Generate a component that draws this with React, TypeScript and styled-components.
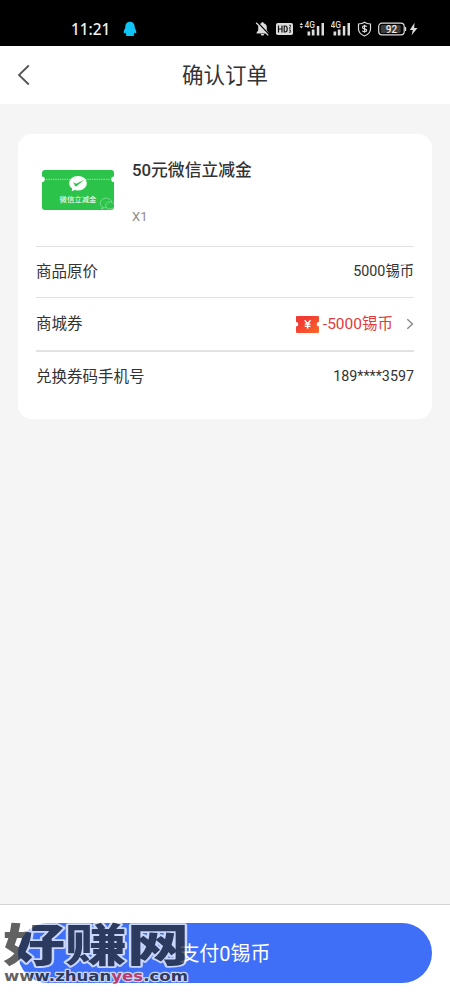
import * as React from "react";
import { ReactElement } from "react";
import styled, { createGlobalStyle } from "styled-components";

const colors = {
	page: "#f5f5f5",
	white: "#fff",
	text: "#333",
	muted: "#8c8c8c",
	line: "#e2e2e2",
	red: "#e03b3b",
	green: "#2cc34b",
	blue: "#3e6ff6",
	status: "#dcdcdc",
};

const GlobalStyle = createGlobalStyle`
	* {
		box-sizing: border-box;
	}
	body {
		margin: 0;
		background: ${colors.page};
		font-family: Roboto, "Noto Sans CJK SC", sans-serif;
		color: ${colors.text};
	}
	svg {
		display: block;
		flex: none;
	}
`;

const Screen = styled.div`
	display: flex;
	flex-direction: column;
	height: 1000px;
	overflow: hidden;
`;

const StatusBar = styled.div`
	display: flex;
	align-items: center;
	justify-content: space-between;
	height: 46px;
	padding: 12px 31px 0 71px;
	background: #000;
`;

const StatusGroup = styled.div<{ gap: number }>`
	display: flex;
	align-items: center;
	gap: ${(p) => p.gap}px;
`;

const Clock = styled.span`
	width: 39px;
	font: 500 15.3px/20px "Noto Sans", sans-serif;
	color: #f2f2f2;
	white-space: nowrap;
`;

const Header = styled.header`
	display: grid;
	grid-template-columns: 60px 1fr 60px;
	align-items: center;
	height: 58px;
	background: ${colors.white};
`;

const Back = styled.button`
	display: flex;
	height: 58px;
	padding: 0 0 0 17px;
	align-items: center;
	border: 0;
	background: none;
`;

const Title = styled.h1`
	margin: 0;
	padding-top: 2px;
	font-size: 21.5px;
	line-height: 32px;
	font-weight: 400;
	text-align: center;
`;

const Content = styled.main`
	flex: 1;
	padding: 30px 18px;
`;

const Card = styled.section`
	height: 285px;
	padding: 0 18px;
	border-radius: 14px;
	background: ${colors.white};
`;

const Product = styled.div`
	display: flex;
	gap: 18px;
	height: 112px;
	padding: 35px 0 0 6px;
`;

const ProductInfo = styled.div`
	display: flex;
	flex-direction: column;
	gap: 23px;
	margin-top: -11px;
`;

const ProductName = styled.span`
	font-size: 16.8px;
	line-height: 24px;
	font-weight: 500;
`;

const Amount = styled.span`
	font-size: 13px;
	line-height: 24px;
	color: ${colors.muted};
`;

const Row = styled.div<{ height: number; line?: number }>`
	display: flex;
	align-items: center;
	justify-content: space-between;
	height: ${(p) => p.height}px;
	border-top: ${(p) => p.line || 1}px solid ${colors.line};
`;

const Label = styled.span`
	font-size: 15.5px;
	line-height: 24px;
`;

const Value = styled.span<{ large?: boolean }>`
	padding-bottom: ${(p) => (p.large ? 0 : 2)}px;
	font-size: ${(p) => (p.large ? 15.5 : 14.3)}px;
	line-height: 24px;
`;

const Coupon = styled.div`
	display: flex;
	align-items: center;
	color: ${colors.red};
	svg:first-child {
		margin-right: 4px;
	}
	svg:last-child {
		margin-left: 13px;
	}
`;

const Footer = styled.footer`
	position: relative;
	height: 96px;
	padding: 18px;
	border-top: 1px solid #d4d4d4;
	background: ${colors.white};
`;

const PayButton = styled.button`
	display: block;
	width: 100%;
	height: 60px;
	padding: 2px 0 0;
	border: 0;
	border-radius: 30px;
	background: ${colors.blue};
	font: 400 20px/58px Roboto, "Noto Sans CJK SC", sans-serif;
	color: ${colors.white};
`;

const Watermark = styled.svg`
	position: absolute;
	left: 0;
	top: 13px;
	overflow: visible;
	opacity: 0.72;
	pointer-events: none;
	text {
		fill: #272727;
		stroke: #fff;
		stroke-linejoin: round;
		paint-order: stroke;
	}
	.red {
		fill: #e52a3a;
	}
`;

const PenguinIcon = () => (
	<svg width="14" height="16" viewBox="0 0 14 16">
		<path
			fill="#10c4f7"
			d="M7 .8c3 0 4.7 2.2 4.7 5 0 1.400.6 2 1.100 3.200.6 1.400.8 2.900.2 3.300-.5.3-1-.3-1.300-.8-.2.9-.7 1.500-1.200 2 .5.3.8.600.7 1-.2.7-2.700.6-4.200.4-1.500.2-4 .3-4.200-.4-.1-.4.2-.7.7-1-.5-.5-1-1.100-1.200-2-.3.5-.8 1.100-1.300.8-.6-.4-.4-1.900.2-3.300.5-1.200 1.100-1.800 1.100-3.200 0-2.800 1.700-5 4.700-5z"
		/>
	</svg>
);

const MuteIcon = () => (
	<svg width="15" height="16" viewBox="0 0 15 16">
		<path fill={colors.status} d="M7.500 1.300c.8 0 1.200.4 1.300 1 2 .6 3 2.200 3 4.300v2.800l1.600 2.200v.8H1.600v-.8l1.600-2.200V6.600c0-2.100 1-3.700 3-4.300.1-.6.5-1 1.300-1zM5.800 13h3.400c-.2 1-.8 1.500-1.700 1.500S6 14 5.800 13z" />
		<path stroke="#000" strokeWidth="1.400" d="M2.300 1.200l12 12.500" />
		<path stroke={colors.status} strokeWidth="1.300" d="M1.200 1.800l12 12.600" />
	</svg>
);

const HdIcon = () => (
	<svg width="17" height="12" viewBox="0 0 17 12">
		<rect width="17" height="12" rx="1.800" fill={colors.status} />
		<path d="M2.500 2.500v7M6 2.500v7M2.500 6H6M8.200 3v6h1c1.400 0 2-1 2-3s-.6-3-2-3z" fill="none" stroke="#111" strokeWidth="1.200" />
		<path d="M13 2.300h1.500v1.500L13 5.200h1.800M13 7h1.700L13.800 8.200c1.400.2 1 1.600-.8 1.300" fill="none" stroke="#111" strokeWidth=".8" />
	</svg>
);

const SignalIcon = ({ arrows }: { arrows?: boolean }) => (
	<svg width={arrows ? 26 : 20} height="16" viewBox={arrows ? "-6 0 26 16" : "0 0 20 16"}>
		{arrows && <path fill={colors.status} d="M-5.500 4L-3.700 1.800-1.900 4zM-5.500 5.300h3.600l-1.800 2.200z" />}
		<g fill={colors.status}>
			<path d="M2.500 10.500h2.700v4H2.500zM6.800 8.500h2.700v6H6.800zM11.800 5h2.500v9.500h-2.500zM16.500 2h2.500v12.500h-2.500z" />
			<text x="-.5" y="7.200" fontSize="8.800" fontWeight="500" fontFamily="Roboto" textLength="10.500" lengthAdjust="spacingAndGlyphs">4G</text>
		</g>
	</svg>
);

const ShieldIcon = () => (
	<svg width="15" height="16" viewBox="0 0 15 16" fill="none" stroke={colors.status} strokeWidth="1.200">
		<path d="M7.500 1.200c1.700 1.200 3.800 1.700 6 1.800v5c0 3.200-2.300 5.500-6 7-3.700-1.500-6-3.800-6-7V3c2.200-.1 4.300-.6 6-1.800z" />
		<path d="M9.700 5.700C9 4.600 5.500 4.500 5.500 6.400c0 1.800 4.200 1 4.200 2.900 0 1.800-3.600 1.700-4.400.4M7.500 3.800v8" />
	</svg>
);

const BatteryIcon = () => (
	<svg width="41" height="14" viewBox="0 0 41 14">
		<rect x=".7" y="1.200" width="25.500" height="11.600" rx="3.300" fill="none" stroke={colors.status} strokeWidth="1.200" />
		<rect x="2.700" y="3" width="20" height="8" rx="1.500" fill="#3c3c3c" />
		<path d="M27.500 5v4" stroke={colors.status} strokeWidth="1.300" />
		<text x="13.500" y="10.700" textAnchor="middle" fontSize="10" fontWeight="500" fontFamily="Roboto" fill="#eee">92</text>
		<path d="M36.500.8L31.800 8h3l-1.200 5.300L39.500 6h-3.300z" fill={colors.status} />
	</svg>
);

const Voucher = () => (
	<svg width="72" height="42" viewBox="0 0 72 42">
		<path
			fill={colors.green}
			d="M3 1h66a3 3 0 0 1 3 3v3.500a2.800 2.800 0 0 0 0 5.600V38a3 3 0 0 1-3 3H3a3 3 0 0 1-3-3V13.100a2.800 2.800 0 0 0 0-5.600V4a3 3 0 0 1 3-3z"
		/>
		<path d="M4 10.300h64" stroke="#b9edc2" strokeWidth=".8" strokeDasharray="1.500 .8" />
		<path fill="#fff" d="M36 7c5 0 8.800 3.200 8.800 7.200s-3.800 7.200-8.800 7.200c-1.200 0-2.300-.2-3.300-.5l-3 1.300.5-2.700c-1.900-1.300-3-3.200-3-5.300C27.200 10.200 31 7 36 7z" />
		<path fill={colors.green} d="M31.200 13.300l3 1.500 8-4.100-7.700 6.600c-.5.4-1 .3-1.300-.3z" />
		<text x="36" y="32.500" textAnchor="middle" fontSize="7.400" fontWeight="400" fill="#fff">微信立减金</text>
		<g fill="none" stroke="#8bdd99" strokeWidth=".8">
			<path d="M65 38.500c-3.300 1-6.700-1.200-6.700-4.400 0-3 2.600-5 5.800-5 3 0 5 1.700 5.500 3.700M60 38l-.5 2 2.200-1" />
			<path d="M68 32.800c2 0 3.600 1.200 4 2.500M68 32.800c-2.500 0-4.400 1.600-4.400 3.700s2 3.500 4.200 3.500c1.500 0 3-.5 4.200-1.500M66 35.500v.3M62 32.500v.3M66 32v.3" />
		</g>
	</svg>
);

const CouponIcon = () => (
	<svg width="23" height="17" viewBox="0 0 23 17">
		<defs>
			<linearGradient id="coupon" x1="0" y1="0" x2="1" y2="1">
				<stop offset=".3" stopColor="#f23b32" />
				<stop offset="1" stopColor="#fb6a27" />
			</linearGradient>
		</defs>
		<path fill="url(#coupon)" d="M1.500 0h20A1.300 1.300 0 0 1 23 1.400V6a2.300 2.300 0 0 0 0 4.600v5a1.300 1.300 0 0 1-1.500 1.400h-20A1.300 1.300 0 0 1 0 15.600v-5A2.300 2.300 0 0 0 0 6V1.400A1.300 1.300 0 0 1 1.500 0z" />
		<path d="M8.700 4.300l2.900 3.500 2.900-3.500M11.600 7.800v5M8.700 8.100h5.800M8.700 10.400h5.800" fill="none" stroke="#fff" strokeWidth="1.400" />
	</svg>
);

const App = (): ReactElement => {
	return (
		<Screen>
			<GlobalStyle />
			<StatusBar>
				<StatusGroup gap={13}>
					<Clock>11:21</Clock>
					<PenguinIcon />
				</StatusGroup>
				<StatusGroup gap={6}>
					<MuteIcon />
					<HdIcon />
					<SignalIcon arrows />
					<SignalIcon />
					<ShieldIcon />
					<BatteryIcon />
				</StatusGroup>
			</StatusBar>

			<Header>
				<Back aria-label="返回">
					<svg width="14" height="22" viewBox="0 0 14 22" fill="none" stroke="#555" strokeWidth="1.800">
						<path d="M11.800 1.500L2 11l9.800 9.500" />
					</svg>
				</Back>
				<Title>确认订单</Title>
			</Header>

			<Content>
				<Card>
					<Product>
						<Voucher />
						<ProductInfo>
							<ProductName>50元微信立减金</ProductName>
							<Amount>X1</Amount>
						</ProductInfo>
					</Product>
					<Row height={51}>
						<Label>商品原价</Label>
						<Value>5000锡币</Value>
					</Row>
					<Row height={53}>
						<Label>商城券</Label>
						<Coupon>
							<CouponIcon />
							<Value large>-5000锡币</Value>
							<svg width="8" height="12" viewBox="0 0 8 12" fill="none" stroke="#888" strokeWidth="1.400">
								<path d="M1.300 1.200L6.500 6l-5.200 4.800" />
							</svg>
						</Coupon>
					</Row>
					<Row height={52} line={2}>
						<Label>兑换券码手机号</Label>
						<Value>189****3597</Value>
					</Row>
				</Card>
			</Content>

			<Footer>
				<PayButton>支付0锡币</PayButton>
				<Watermark width="192" height="70" viewBox="0 0 192 70">
					<text x="3" y="44" fontSize="45" fontWeight="900" strokeWidth="3.500" textLength="186" lengthAdjust="spacingAndGlyphs" fontFamily="Noto Sans CJK SC">
						好赚网
					</text>
					<text x="4" y="63" fontSize="14.500" fontWeight="700" strokeWidth="2.500" textLength="184" lengthAdjust="spacingAndGlyphs" fontFamily="DejaVu Sans">
						www.zhuan<tspan className="red">yes</tspan>.com
					</text>
				</Watermark>
			</Footer>
		</Screen>
	);
};

export default App;
